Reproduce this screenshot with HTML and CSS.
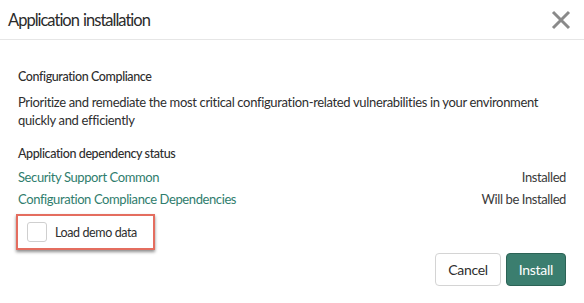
FILE: index.html
```html
<!DOCTYPE html>
<html>
<head>
<meta charset="utf-8">
<link rel="stylesheet" href="styles.css">
</head>
<body>
<div class="modal">
  <div class="modal-header">
    <h1 class="title">Application installation</h1>
    <button class="close" aria-label="Close">
      <svg width="20" height="20" viewBox="0 0 20 20"><path d="M2 2 L18 18 M18 2 L2 18" stroke="#8a8a8a" stroke-width="3" fill="none"/></svg>
    </button>
  </div>
  <div class="modal-body">
    <div class="app-name">Configuration Compliance</div>
    <p class="desc">Prioritize and remediate the most critical configuration-related vulnerabilities in your environment quickly and efficiently</p>
    <div class="dep-title">Application dependency status</div>
    <div class="dep-row"><a class="dep-link">Security Support Common</a><span class="dep-status">Installed</span></div>
    <div class="dep-row"><a class="dep-link">Configuration Compliance Dependencies</a><span class="dep-status">Will be Installed</span></div>
    <label class="demo">
      <span class="checkbox"></span>
      <span class="demo-label">Load demo data</span>
    </label>
  </div>
  <div class="modal-footer">
    <button class="btn btn-default">Cancel</button>
    <button class="btn btn-primary">Install</button>
  </div>
</div>
</body>
</html>
```
FILE: styles.css
```css
html, body {
  margin: 0;
  padding: 0;
  background: #fff;
}
body {
  font-family: Lato, "Open Sans", sans-serif;
  color: #2e2e2e;
  font-size: 13px;
  letter-spacing: -0.4px;
}
.modal {
  width: 584px;
  height: 303px;
  display: flex;
  flex-direction: column;
}
.modal-header {
  height: 40px;
  box-sizing: border-box;
  border-bottom: 1px solid #e6e6e6;
  display: flex;
  align-items: center;
  justify-content: space-between;
  padding: 0 13px 0 8px;
}
.title {
  margin: 0;
  font-size: 16.5px;
  font-weight: 400;
  color: #2b2b2b;
  letter-spacing: -1px;
  word-spacing: 1px;
}
.close {
  border: 0;
  background: none;
  padding: 0;
  width: 20px;
  height: 20px;
  display: flex;
}
.modal-body {
  padding: 28px 18px 0 18px;
}
.app-name {
  font-size: 12.5px;
  line-height: 18px;
  font-weight: 500;
}
.desc {
  margin: 7px 0 0 0;
  line-height: 18px;
  letter-spacing: -0.34px;
}
.dep-title {
  margin-top: 16px;
  font-size: 12.5px;
  line-height: 18px;
  font-weight: 500;
}
.dep-row {
  display: flex;
  justify-content: space-between;
  line-height: 18px;
  margin-top: 5px;
}
.dep-row + .dep-row {
  margin-top: 4px;
}
.dep-link {
  color: #2f7d6d;
}
.dep-status {
  color: #3a3a3a;
}
.demo {
  margin: 6px 0 0 -2px;
  display: inline-flex;
  align-items: center;
  gap: 8px;
  padding: 6px 16px 6px 9px;
  border: 2px solid #e46d5f;
  box-shadow: 0 2px 3px rgba(0,0,0,0.45);
  font-size: 12.5px;
}
.checkbox {
  width: 18px;
  height: 18px;
  border: 1px solid #cfcfcf;
  border-radius: 3px;
  background: #fff;
}
.modal-footer {
  margin-top: auto;
  display: flex;
  justify-content: flex-end;
  gap: 5px;
  padding: 0 18px 17px 18px;
}
.btn {
  font-family: inherit;
  font-size: 14px;
  letter-spacing: -0.3px;
  height: 33px;
  border-radius: 4px;
  padding: 0 12px;
}
.btn-default {
  background: #fff;
  border: 1px solid #d4d4d4;
  color: #2e2e2e;
}
.btn-primary {
  background: #3b7e6f;
  border: 1px solid #2c6356;
  color: #fff;
}
```
